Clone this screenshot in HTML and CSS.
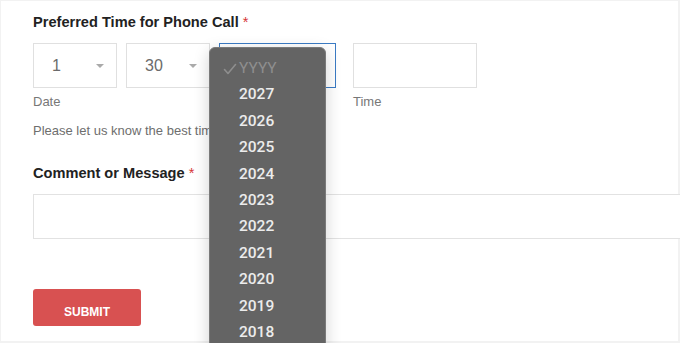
FILE: index.html
```html
<!DOCTYPE html>
<html>
<head>
<meta charset="utf-8">
<link rel="stylesheet" href="styles.css">
</head>
<body>
<div class="card">
  <div class="field">
    <div class="label">Preferred Time for Phone Call <span class="req">*</span></div>
    <div class="row">
      <div class="col">
        <div class="selects">
          <div class="sel w84"><span>1</span><i class="arrow"></i></div>
          <div class="sel w84"><span>30</span><i class="arrow"></i></div>
          <div class="sel w117 focus"></div>
        </div>
        <div class="sub">Date</div>
      </div>
      <div class="col">
        <div class="sel w124"></div>
        <div class="sub">Time</div>
      </div>
    </div>
    <div class="help">Please let us know the best time to call you.</div>
  </div>
  <div class="field2">
    <div class="label">Comment or Message <span class="req">*</span></div>
    <div class="input"></div>
  </div>
  <button class="submit">SUBMIT</button>

  <div class="dropdown">
    <div class="opt placeholder"><svg class="check" width="14" height="12" viewBox="0 0 14 12"><path d="M1.5 6.5 L5 10.5 L12.5 1.5" fill="none" stroke="#8e8e8e" stroke-width="1.6" stroke-linecap="round" stroke-linejoin="round"/></svg>YYYY</div>
    <div class="opt">2027</div>
    <div class="opt">2026</div>
    <div class="opt">2025</div>
    <div class="opt">2024</div>
    <div class="opt">2023</div>
    <div class="opt">2022</div>
    <div class="opt">2021</div>
    <div class="opt">2020</div>
    <div class="opt">2019</div>
    <div class="opt">2018</div>
  </div>
</div>
</body>
</html>
```
FILE: styles.css
```css
html, body {
  margin: 0;
  padding: 0;
  background: #f2f2f2;
  width: 680px;
  height: 343px;
  overflow: hidden;
}
body {
  font-family: "Liberation Sans", Arial, sans-serif;
  color: #222;
}
.card {
  position: relative;
  margin: 1px 0 0 1px;
  width: 677px;
  height: 340px;
  background: #fff;
  box-sizing: border-box;
  padding: 12px 0 0 32px;
}
.label {
  font-size: 14.6px;
  font-weight: bold;
  line-height: 18px;
  color: #222;
}
.req {
  color: #d63638;
  font-weight: normal;
}
.row {
  display: flex;
  gap: 17px;
  margin-top: 12px;
}
.selects {
  display: flex;
  gap: 9px;
}
.sel {
  box-sizing: border-box;
  height: 45px;
  border: 1px solid #e0e0e0;
  background: #fff;
  display: flex;
  align-items: center;
  padding-left: 18px;
  font-size: 16px;
  color: #6b6b6b;
  position: relative;
}
.sel.w84 { width: 84px; }
.sel.w117 { width: 117px; }
.sel.w124 { width: 124px; }
.sel.focus { border-color: #3b7bc4; }
.arrow {
  position: absolute;
  right: 12px;
  top: 20px;
  width: 0;
  height: 0;
  border-left: 4px solid transparent;
  border-right: 4px solid transparent;
  border-top: 4px solid #aaa;
}
.sub {
  font-size: 13px;
  color: #777;
  margin-top: 6px;
  line-height: 16px;
}
.help {
  font-size: 13px;
  color: #6e6e6e;
  margin-top: 13px;
  line-height: 16px;
}
.field2 {
  margin-top: 25px;
}
.input {
  margin-top: 12px;
  width: 648px;
  height: 45px;
  box-sizing: border-box;
  border: 1px solid #e2e2e2;
  background: #fff;
}
.submit {
  margin-top: 50px;
  width: 108px;
  height: 37px;
  border: none;
  border-radius: 3px;
  background: #d85151;
  color: #fff;
  font-family: "Liberation Sans", Arial, sans-serif;
  font-weight: bold;
  font-size: 12px;
  padding: 0;
  padding-top: 9px;
  display: block;
}
.dropdown {
  position: absolute;
  left: 208px;
  top: 46px;
  width: 117px;
  height: 310px;
  box-sizing: border-box;
  background: #646464;
  border: 1px solid #7a7a7a;
  border-radius: 6px;
  box-shadow: 0 4px 16px rgba(0,0,0,0.18);
  padding-top: 7px;
}
.opt {
  height: 26.4px;
  line-height: 26.4px;
  padding-left: 29px;
  font-family: Roboto, "Liberation Sans", sans-serif;
  font-size: 15.5px;
  font-weight: 500;
  color: #ececec;
  position: relative;
}
.opt.placeholder {
  color: #8e8e8e;
  font-weight: 400;
}
.check {
  position: absolute;
  left: 13px;
  top: 8px;
}
```
